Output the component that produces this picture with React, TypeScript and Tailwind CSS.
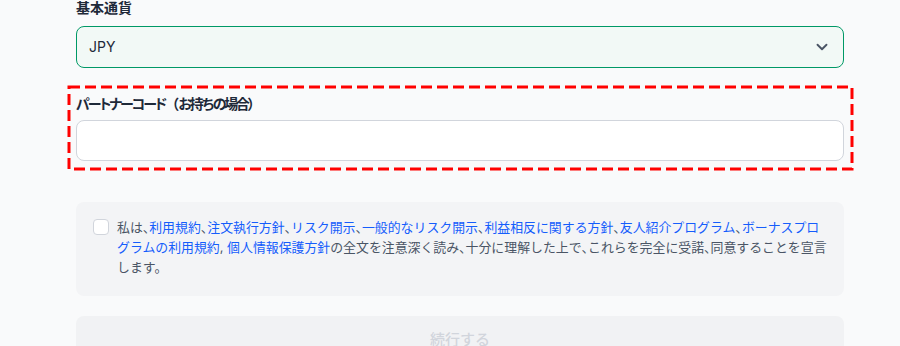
import { ChevronDown } from "lucide-react";

const font = "font-['Inter','Noto_Sans_CJK_JP',sans-serif]";

function Link({ children }: { children: React.ReactNode }) {
  return <a className="text-blue-600 hover:underline cursor-pointer">{children}</a>;
}

// the ideographic comma is set half-width in the reference
function C() {
  return <span className="[font-feature-settings:'palt']">、</span>;
}

export default function App() {
  return (
    <div className={`min-h-screen bg-gray-50 ${font}`}>
      <div className="w-[768px] ml-[76px] flex flex-col">
        {/* Base currency */}
        <label className="text-sm leading-4 font-bold text-gray-800 mb-[10px]">基本通貨</label>
        <div className="relative h-[42px] rounded-lg border border-emerald-600 bg-[#f2f9f6] flex items-center px-3">
          <span className="text-sm text-gray-800">JPY</span>
          <ChevronDown className="absolute right-[12px] top-[11px] w-[18px] h-[18px] text-gray-600" strokeWidth={2.5} />
        </div>

        {/* Partner code (highlighted) */}
        <div className="relative mt-[26px] flex flex-col">
          <svg className="absolute -inset-[7.5px] w-[calc(100%+15px)] h-[calc(100%+15px)] overflow-visible pointer-events-none">
            <rect width="100%" height="100%" fill="none" stroke="#ff0000" strokeWidth={3} strokeDasharray="11 5" />
          </svg>
          <label className="text-sm leading-5 font-bold text-gray-800 mb-1.5">
            <span className="[font-feature-settings:'palt'] tracking-[-2px]">パートナーコード</span>
            <span className="tracking-[-1px]">（</span>
            <span className="tracking-[-2.5px]">お持ちの場合</span>
            <span>）</span>
          </label>
          <input
            type="text"
            className="h-[41px] rounded-lg border border-gray-300 bg-white px-3 text-sm outline-none"
          />
        </div>

        {/* Agreement */}
        <div className="mt-[41px] rounded-lg bg-gray-100 pl-4 pr-4 pt-4 pb-[18px] flex items-start gap-2">
          <span className="mt-px ml-px w-4 h-4 shrink-0 rounded border border-gray-300 bg-white" />
          <p className="text-[12.9px] leading-5 text-gray-600">
            私は<C /><Link>利用規約</Link><C /><Link>注文執行方針</Link><C /><Link>リスク開示</Link><C />
            <Link>一般的なリスク開示</Link><C /><Link>利益相反に関する方針</Link><C />
            <Link>友人紹介プログラム</Link><C /><Link>ボーナスプログラムの利用規約</Link>,{" "}
            <Link>個人情報保護方針</Link>
            の全文を注意深く読み<C />十分に理解した上で<C />これらを完全に受諾<C />同意することを宣言します。
          </p>
        </div>

        {/* Submit */}
        <button
          disabled
          className="mt-5 h-12 rounded-lg bg-[#f1f2f4] text-[15px] font-medium text-gray-300"
        >
          続行する
        </button>
      </div>
    </div>
  );
}
